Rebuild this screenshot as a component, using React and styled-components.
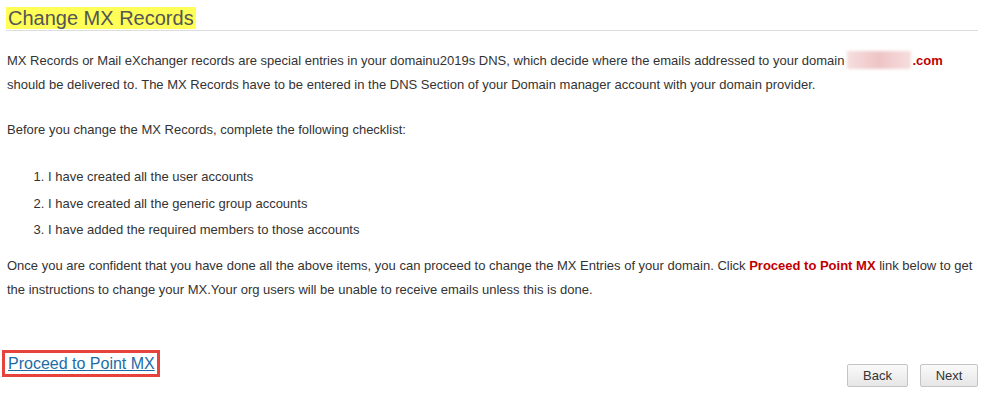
import styled, { createGlobalStyle } from "styled-components";

const GlobalStyle = createGlobalStyle`
  html, body {
    margin: 0;
    padding: 0;
    background: #fff;
  }
  body {
    font-family: "Liberation Sans", Arial, sans-serif;
    color: #333;
  }
`

const Page = styled.div`
  width: 985px;
  height: 395px;
  padding: 7px 7px 0 6px;
  box-sizing: border-box;
  display: flex;
  flex-direction: column;
`

const TitleRow = styled.div`
  border-bottom: 1px solid #dcdcdc;
  height: 23px;
`

const Titulo = styled.h1`
  display: inline-block;
  margin: 0;
  padding: 0 2px 0 2px;
  background: #ffff57;
  color: #555;
  font-size: 20px;
  font-weight: normal;
  line-height: 22px;
`

const Paragrafo = styled.p`
  margin: ${p => p.$top || 0}px 0 0 1px;
  font-size: 13px;
  line-height: 24px;
  color: #333;
`

const Destaque = styled.b`
  color: #c00000;
`

const Borrado = styled.span`
  display: inline-block;
  width: 64px;
  height: 18px;
  vertical-align: -4px;
  margin: 0 1px 0 3px;
  background: linear-gradient(90deg, #f6dede, #eec4c6 50%, #f6dede);
  filter: blur(1.5px);
`

const Lista = styled.ol`
  margin: 22px 0 0 0;
  padding: 0 0 0 42px;
  font-size: 13px;
  line-height: 26.5px;
  color: #333;
`

const Rodape = styled.div`
  margin-top: 48px;
  display: flex;
  justify-content: space-between;
  align-items: flex-start;
  margin-left: -4px;
`

const LinkBox = styled.div`
  border: 3px solid #e5433b;
  padding: 0 2px 0 3px;
  height: 21px;
`

const LinkProceed = styled.a`
  color: #1b6ca8;
  font-size: 16px;
  line-height: 21px;
  text-decoration: underline;
`

const Botoes = styled.div`
  display: flex;
  gap: 12px;
  margin-top: 14px;
`

const Botao = styled.button`
  font-family: "Liberation Sans", Arial, sans-serif;
  font-size: 13px;
  color: #333;
  width: ${p => p.$w}px;
  height: 23px;
  border: 1px solid #c4c4c4;
  border-radius: 2px;
  background: linear-gradient(#fafafa, #e6e6e6);
  padding: 0;
`

export default function App() {
  return (
    <>
      <GlobalStyle />
      <Page>
        <TitleRow>
          <Titulo>Change MX Records</Titulo>
        </TitleRow>
        <Paragrafo $top={18}>
          MX Records or Mail eXchanger records are special entries in your domainu2019s DNS, which decide where the emails addressed to your domain
          <Borrado />
          <Destaque>.com</Destaque> should be delivered to. The MX Records have to be entered in the DNS Section of your Domain manager account with your domain provider.
        </Paragrafo>
        <Paragrafo $top={21}>Before you change the MX Records, complete the following checklist:</Paragrafo>
        <Lista>
          <li>I have created all the user accounts</li>
          <li>I have created all the generic group accounts</li>
          <li>I have added the required members to those accounts</li>
        </Lista>
        <Paragrafo $top={10}>
          Once you are confident that you have done all the above items, you can proceed to change the MX Entries of your domain. Click <Destaque>Proceed to Point MX</Destaque> link below to get the instructions to change your MX.Your org users will be unable to receive emails unless this is done.
        </Paragrafo>
        <Rodape>
          <LinkBox>
            <LinkProceed href="#">Proceed to Point MX</LinkProceed>
          </LinkBox>
          <Botoes>
            <Botao $w={61}>Back</Botao>
            <Botao $w={58}>Next</Botao>
          </Botoes>
        </Rodape>
      </Page>
    </>
  )
}
